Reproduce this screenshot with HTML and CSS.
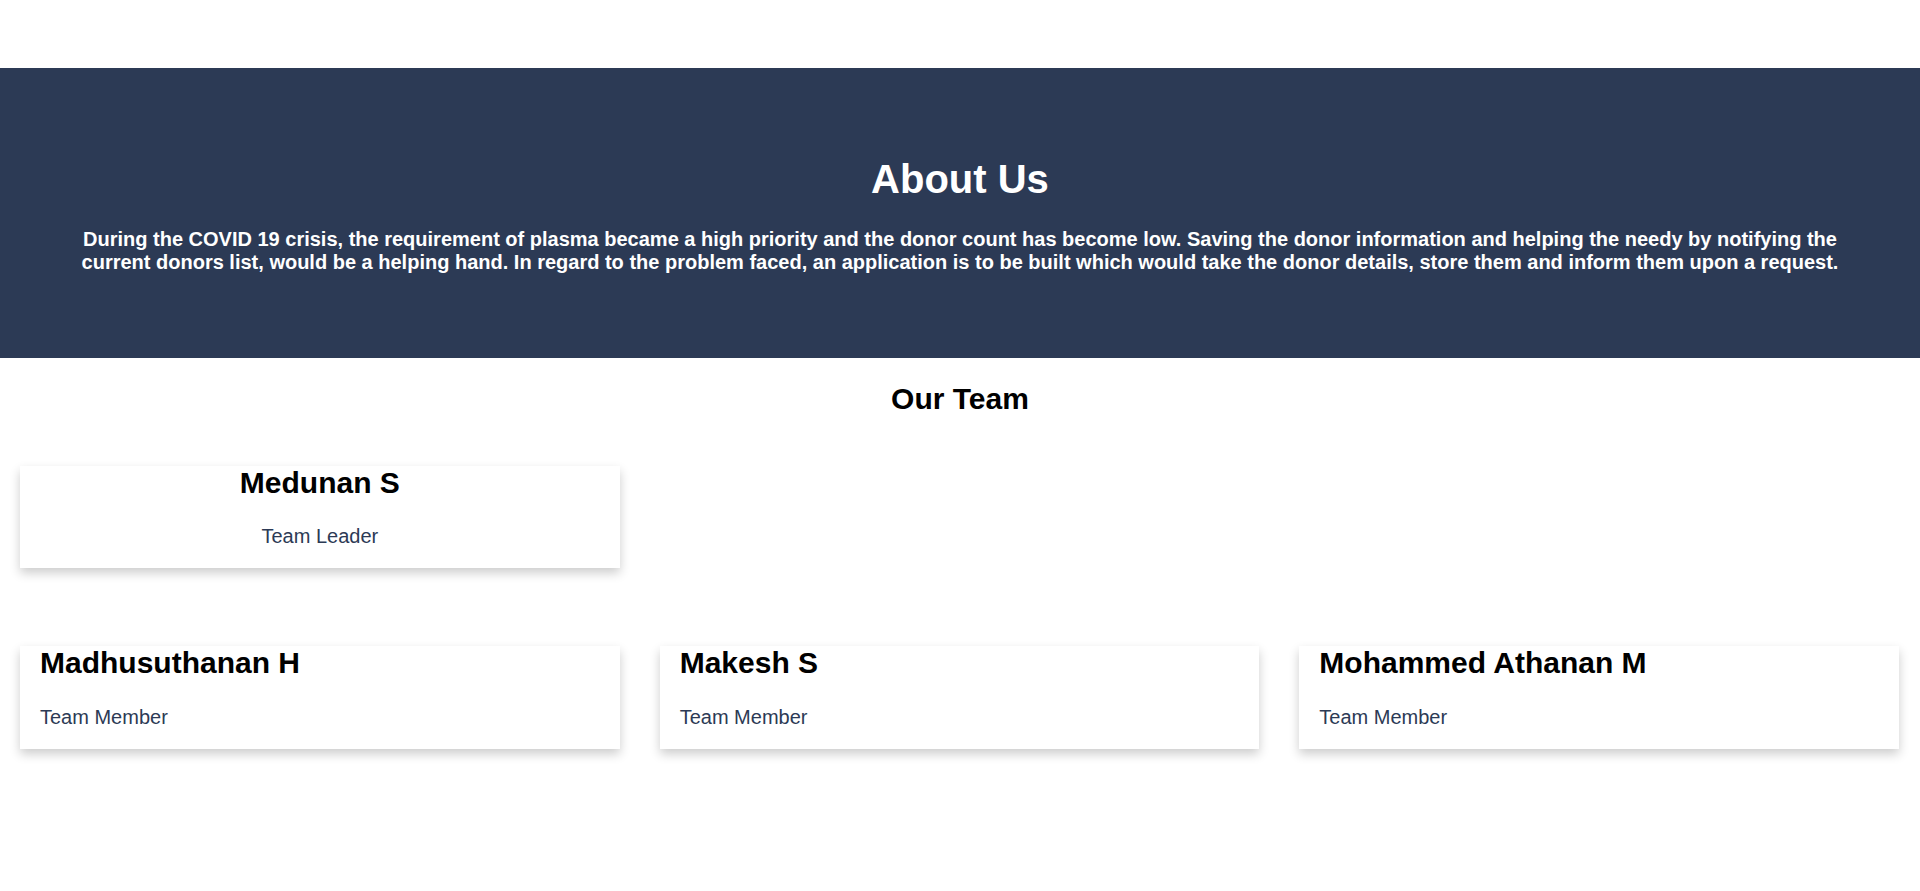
FILE: index.html
```html
<!DOCTYPE html>
<html lang="en">
<head>
<meta charset="utf-8">
<title>About Us</title>
<link rel="stylesheet" href="styles.css">
</head>
<body>
<div class="topbar"></div>
<section class="about">
  <h1>About Us</h1>
  <p>During the COVID 19 crisis, the requirement of plasma became a high priority and the donor count has become low. Saving the donor information and helping the needy by notifying the current donors list, would be a helping hand. In regard to the problem faced, an application is to be built which would take the donor details, store them and inform them upon a request.</p>
</section>
<h2 class="team-title">Our Team</h2>
<div class="team-row lead-row">
  <div class="card center">
    <h2>Medunan S</h2>
    <p class="title">Team Leader</p>
  </div>
</div>
<div class="team-row members-row">
  <div class="card">
    <h2>Madhusuthanan H</h2>
    <p class="title">Team Member</p>
  </div>
  <div class="card">
    <h2>Makesh S</h2>
    <p class="title">Team Member</p>
  </div>
  <div class="card">
    <h2>Mohammed Athanan M</h2>
    <p class="title">Team Member</p>
  </div>
</div>
</body>
</html>
```
FILE: styles.css
```css
html, body {
  margin: 0;
  padding: 0;
  background: #ffffff;
}
body {
  font-family: "Liberation Sans", Arial, sans-serif;
  font-size: 20px;
  color: #000;
}
.topbar {
  height: 68px;
}
.about {
  background-color: #2c3a55;
  color: #ffffff;
  text-align: center;
  padding: 62px 62px;
}
.about h1 {
  font-size: 40px;
  line-height: 46px;
  font-weight: bold;
  margin: 26px 0 26px;
}
.about p {
  font-size: 20px;
  line-height: 23px;
  font-weight: bold;
  margin: 0 0 22px;
}
.team-title {
  text-align: center;
  font-size: 30px;
  line-height: 34.5px;
  font-weight: bold;
  margin: 24px 0 0;
}
.team-row {
  display: grid;
  grid-template-columns: repeat(3, 1fr);
  column-gap: 40px;
  padding: 0 21px 0 20px;
}
.lead-row {
  margin-top: 49px;
}
.members-row {
  margin-top: 78px;
  padding-bottom: 60px;
}
.card {
  background: #fff;
  box-shadow: 0 5px 10px 0 rgba(0, 0, 0, 0.2);
  padding: 0 20px;
}
.card.center {
  text-align: center;
}
.card h2 {
  font-size: 30px;
  line-height: 34.5px;
  font-weight: bold;
  margin: 0 0 25px;
}
.card .title {
  font-size: 20px;
  line-height: 23px;
  color: #2c3a55;
  margin: 0;
  padding-bottom: 20px;
}
```
